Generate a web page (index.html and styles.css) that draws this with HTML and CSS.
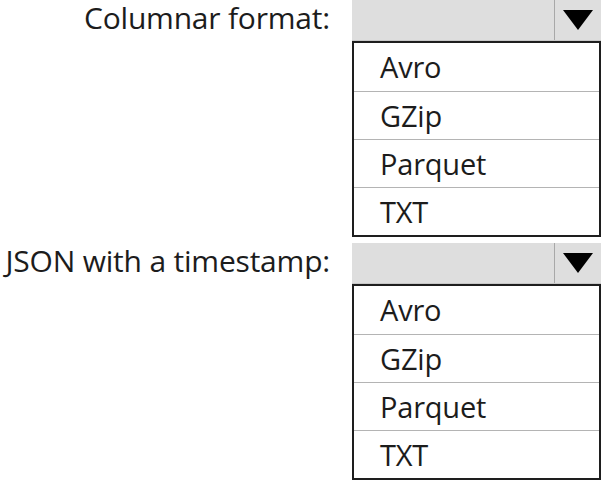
FILE: index.html
```html
<!DOCTYPE html>
<html>
<head>
<meta charset="utf-8">
<link rel="stylesheet" href="styles.css">
</head>
<body>
<div class="form">
  <div class="field">
    <div class="label">Columnar format:</div>
    <div class="dropdown">
      <div class="select">
        <div class="value"></div>
        <div class="button"><span class="arrow"></span></div>
      </div>
      <ul class="options">
        <li>Avro</li>
        <li>GZip</li>
        <li>Parquet</li>
        <li>TXT</li>
      </ul>
    </div>
  </div>
  <div class="field">
    <div class="label">JSON with a timestamp:</div>
    <div class="dropdown">
      <div class="select">
        <div class="value"></div>
        <div class="button"><span class="arrow"></span></div>
      </div>
      <ul class="options">
        <li>Avro</li>
        <li>GZip</li>
        <li>Parquet</li>
        <li>TXT</li>
      </ul>
    </div>
  </div>
</div>
</body>
</html>
```
FILE: styles.css
```css
html, body {
  margin: 0;
  padding: 0;
  background: #ffffff;
}
body {
  font-family: "Open Sans", "Noto Sans", sans-serif;
  color: #1c1c1c;
  width: 603px;
  height: 482px;
  overflow: hidden;
}
.form {
  display: flex;
  flex-direction: column;
  gap: 6px;
}
.field {
  display: flex;
  align-items: flex-start;
}
.label {
  width: 330px;
  height: 41px;
  box-sizing: border-box;
  padding-bottom: 6px;
  display: flex;
  align-items: center;
  justify-content: flex-end;
  font-size: 30px;
  line-height: 34px;
  white-space: nowrap;
  letter-spacing: -0.2px;
}
.dropdown {
  margin-left: 22px;
  width: 249px;
}
.select {
  height: 41px;
  display: flex;
  background: #dedede;
  box-sizing: border-box;
  border-bottom: 1px solid #c8c8c8;
}
.value {
  flex: 1;
}
.button {
  width: 46px;
  border-left: 1px solid #a8a8a8;
  display: flex;
  align-items: center;
  justify-content: center;
}
.arrow {
  width: 0;
  height: 0;
  border-left: 15px solid transparent;
  border-right: 15px solid transparent;
  border-top: 20px solid #000;
}
.options {
  list-style: none;
  margin: 0;
  padding: 0;
  border: 2px solid #1e1e1e;
  background: #fff;
}
.options li {
  height: 48px;
  box-sizing: border-box;
  padding-left: 26px;
  display: flex;
  align-items: center;
  font-size: 29px;
  line-height: 34px;
  letter-spacing: -0.2px;
}
.options li + li {
  border-top: 1px solid #b4b4b4;
}
```
